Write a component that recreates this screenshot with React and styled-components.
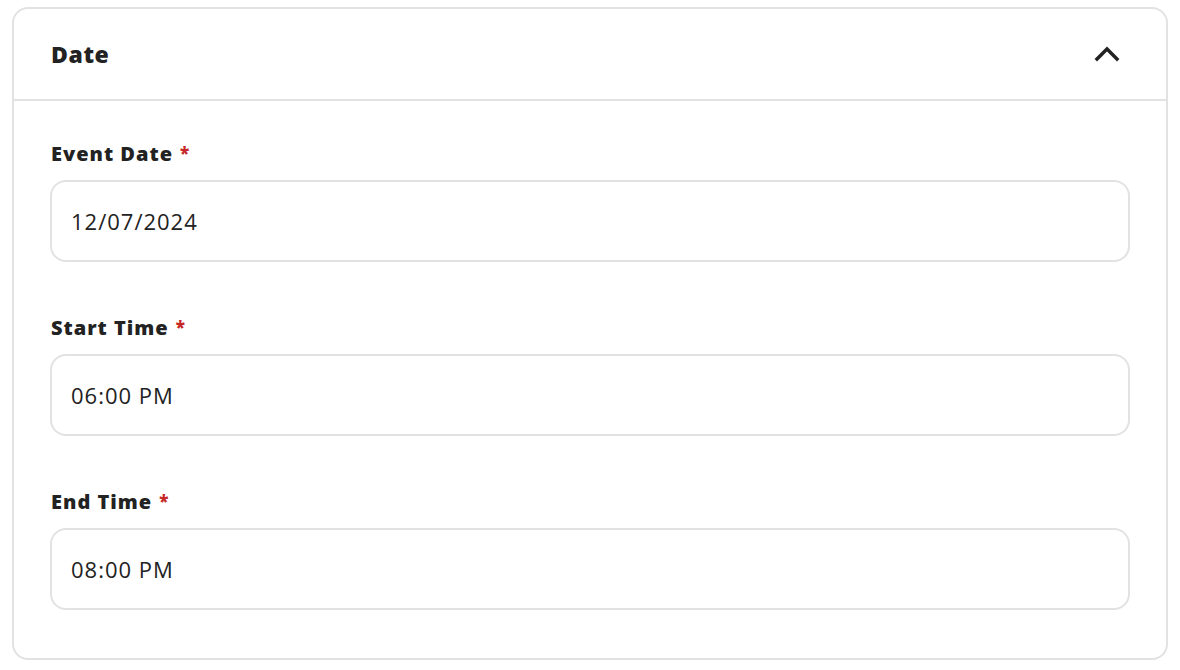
import React from 'react';
import styled, { createGlobalStyle } from 'styled-components';

const GlobalStyle = createGlobalStyle`
  body {
    margin: 0;
    background: #ffffff;
    font-family: 'Open Sans', 'Noto Sans', sans-serif;
    color: #222222;
  }
`;

const Page = styled.div`
  padding: 7px 12px 8px 12px;
`;

const Card = styled.section`
  border: 2px solid #e2e2e2;
  border-radius: 16px;
  background: #ffffff;
  overflow: hidden;
`;

const Header = styled.header`
  display: flex;
  align-items: center;
  justify-content: space-between;
  height: 92px;
  padding: 0 46px 0 37px;
  border-bottom: 2px solid #e2e2e2;
  box-sizing: border-box;
`;

const Title = styled.h2`
  margin: 0;
  font-size: 23px;
  font-weight: 800;
  letter-spacing: 0.6px;
  color: #222222;
`;

const Body = styled.div`
  display: flex;
  flex-direction: column;
  gap: 54px;
  padding: 41px 36px 48px 36px;
`;

const Field = styled.div`
  display: flex;
  flex-direction: column;
  gap: 14px;
`;

const Label = styled.label`
  display: flex;
  align-items: flex-start;
  font-size: 20px;
  font-weight: 800;
  letter-spacing: 1px;
  color: #222222;
  line-height: 24px;
  padding-left: 1px;
`;

const Required = styled.span`
  color: #c62828;
  font-size: 17px;
  line-height: 17px;
  margin-left: 7px;
  margin-top: 2px;
`;

const Input = styled.input`
  box-sizing: border-box;
  width: 100%;
  height: 82px;
  padding: 0 19px;
  border: 2px solid #e2e2e2;
  border-radius: 16px;
  font-family: inherit;
  font-size: 22px;
  letter-spacing: 1px;
  color: #222222;
  background: #ffffff;
  outline: none;
`;

const ChevronUp = () => (
  <svg width="26" height="16" viewBox="0 0 26 16" fill="none" stroke="#222222" strokeWidth="3.4" strokeLinecap="square" strokeLinejoin="miter">
    <path d="M3 13L13 3l10 10" />
  </svg>
);

const fields = [
  { label: 'Event Date', value: '12/07/2024' },
  { label: 'Start Time', value: '06:00 PM' },
  { label: 'End Time', value: '08:00 PM' },
];

export default function App() {
  return (
    <Page>
      <GlobalStyle />
      <Card>
        <Header>
          <Title>Date</Title>
          <ChevronUp />
        </Header>
        <Body>
          {fields.map(f => (
            <Field key={f.label}>
              <Label>
                {f.label}
                <Required>*</Required>
              </Label>
              <Input defaultValue={f.value} readOnly />
            </Field>
          ))}
        </Body>
      </Card>
    </Page>
  );
}
